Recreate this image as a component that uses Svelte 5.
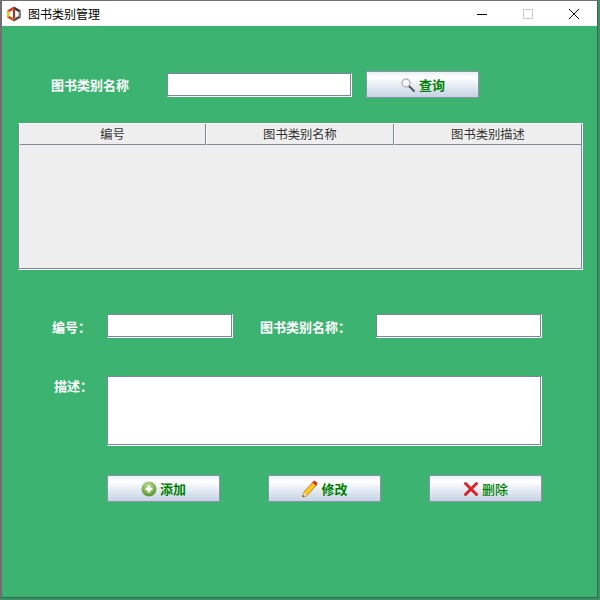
<script>
  const columns = ['编号', '图书类别名称', '图书类别描述'];
</script>

<div class="window">
  <header class="titlebar">
    <svg class="app-icon" width="16" height="16" viewBox="0 0 16 16">
      <path d="M8 0.5 15 4.5V11.5L8 15.5 1 11.5V4.5Z" fill="#fff" />
      <path d="M8 0.5 1 4.5 3.5 6 8 3.5Z" fill="#d9381e" />
      <path d="M1 4.5V11.5L3.5 10V6Z" fill="#f2c21a" />
      <path d="M1 11.5 8 15.5V12.5L3.5 10Z" fill="#c9531c" />
      <path d="M8 0.5 15 4.5 12.5 6 8 3.5Z" fill="#3a3a3a" />
      <path d="M15 4.5V11.5L12.5 10V6Z" fill="#808080" />
      <path d="M15 11.5 8 15.5V12.5L12.5 10Z" fill="#555" />
      <path d="M7 4h2v8H7z" fill="#b02a1a" />
    </svg>
    <span class="title">图书类别管理</span>
    <div class="controls">
      <svg width="12" height="12" viewBox="0 0 12 12"><path d="M1 6.5h10" stroke="#000" /></svg>
      <svg width="12" height="12" viewBox="0 0 12 12"><rect x="1.5" y="1.5" width="9" height="9" fill="none" stroke="#ccc" /></svg>
      <svg width="12" height="12" viewBox="0 0 12 12"><path d="M1 1l10 10M11 1 1 11" stroke="#111" /></svg>
    </div>
  </header>

  <main class="body">
    <section class="search-row">
      <span class="label search-label">图书类别名称</span>
      <div class="field search-field"></div>
      <button class="btn">
        <svg width="16" height="16" viewBox="0 0 16 16">
          <circle cx="6" cy="6" r="4" fill="#f4f6f8" stroke="#b4b8bc" stroke-width="1.5" />
          <path d="M9.5 9.5 14 14" stroke="#55595e" stroke-width="2" stroke-linecap="round" />
        </svg>
        <span>查询</span>
      </button>
    </section>

    <section class="table">
      <div class="thead">
        {#each columns as col}
          <div class="th">{col}</div>
        {/each}
      </div>
      <div class="tbody"></div>
    </section>

    <section class="form-row">
      <span class="label id-label">编号：</span>
      <div class="field id-field"></div>
      <span class="label name-label">图书类别名称：</span>
      <div class="field name-field"></div>
    </section>

    <section class="desc-row">
      <span class="label desc-label">描述：</span>
      <div class="field desc-field"></div>
    </section>

    <section class="actions">
      <button class="btn">
        <svg width="16" height="16" viewBox="0 0 16 16">
          <defs>
            <radialGradient id="plusFill" cx="0.45" cy="0.25" r="0.85">
              <stop offset="0" stop-color="#b9dc8e" />
              <stop offset="1" stop-color="#4f8a24" />
            </radialGradient>
          </defs>
          <circle cx="8" cy="8" r="7.5" fill="url(#plusFill)" />
          <path d="M8 4.5v7M4.5 8h7" stroke="#fff" stroke-width="2.6" />
        </svg>
        <span>添加</span>
      </button>
      <button class="btn">
        <svg width="17" height="18" viewBox="0 0 17 18">
          <path d="M12 2 15.5 5 6 15.5 1.8 17 2.6 12.5Z" fill="#ffc81e" stroke="#a86f10" stroke-width="0.8" />
          <path d="M12.2 1.4 13.5 0.6 16.6 3.3 15.8 5 14.8 5.6 11.2 2.6Z" fill="#e02a20" />
          <path d="M2.6 12.5 1.6 17 6 15.5Z" fill="#f3d9b0" />
          <path d="M2 15 1.6 17 3.8 16.3Z" fill="#5a2b10" />
        </svg>
        <span>修改</span>
      </button>
      <button class="btn">
        <svg width="16" height="16" viewBox="0 0 16 16">
          <path d="M2.5 2.5 13.5 13.5M13.5 2.5 2.5 13.5" stroke="#d8232a" stroke-width="3" stroke-linecap="round" />
        </svg>
        <span class="thin">删除</span>
      </button>
    </section>
  </main>
</div>

<style>
  :global(body) {
    margin: 0;
    background: #3d8f66;
  }
  .window {
    width: 598px;
    height: 598px;
    box-sizing: border-box;
    border: solid #707070;
    border-width: 1px 1px 1px 2px;
    border-right-color: #34694f;
    border-bottom-color: #34694f;
    display: flex;
    flex-direction: column;
    font-family: "Noto Sans CJK SC", "Liberation Sans", sans-serif;
  }
  .titlebar {
    height: 25px;
    flex: none;
    background: #fff;
    display: flex;
    align-items: center;
    padding-left: 4px;
  }
  .app-icon {
    margin-right: 6px;
  }
  .title {
    font-size: 12px;
    color: #000;
  }
  .controls {
    margin-left: auto;
    display: flex;
    gap: 34px;
    padding-right: 17px;
  }
  .body {
    flex: 1;
    background: #3cb371;
    padding: 45px 14px 0 16px;
  }
  .label {
    color: #fff;
    font-size: 13px;
    font-weight: 700;
    white-space: nowrap;
  }
  .field {
    box-sizing: border-box;
    background: #fff;
    border: 1px solid;
    border-color: #7a8a99 #fff #fff #7a8a99;
    box-shadow: inset -1px -1px 0 #7a8a99;
  }
  .search-row {
    display: flex;
    align-items: center;
    height: 27px;
    padding-left: 33px;
  }
  .search-label {
    width: 116px;
  }
  .search-field {
    width: 185px;
    height: 24px;
    margin-right: 14px;
  }
  .table {
    margin-top: 25px;
    width: 565px;
    height: 147px;
    box-sizing: border-box;
    background: #eeeeee;
    border: 1px solid;
    border-color: #fff #fff #fff #7a8a99;
    box-shadow: inset -1px -1px 0 #7a8a99;
    display: flex;
    flex-direction: column;
  }
  .thead {
    display: grid;
    grid-template-columns: 187px 188px 188px;
    height: 20px;
    flex: none;
  }
  .th {
    box-sizing: border-box;
    border-left: 1px solid #fff;
    border-right: 1px solid #7a8a99;
    border-bottom: 1px solid #7a8a99;
    background: #eeeeee;
    color: #333;
    font-size: 12.3px;
    line-height: 20px;
    text-align: center;
  }
  .tbody {
    flex: 1;
  }
  .form-row {
    margin-top: 44px;
    display: flex;
    align-items: center;
    height: 24px;
    padding-left: 34px;
  }
  .id-label {
    width: 55px;
  }
  .id-field {
    width: 126px;
    height: 24px;
    margin-right: 27px;
  }
  .name-label {
    width: 116px;
  }
  .name-field {
    width: 166px;
    height: 24px;
  }
  .desc-row {
    margin-top: 38px;
    display: flex;
    align-items: flex-start;
    padding-left: 36px;
  }
  .desc-label {
    width: 53px;
    line-height: 20px;
  }
  .desc-field {
    width: 435px;
    height: 70px;
  }
  .actions {
    margin-top: 29px;
    padding-left: 89px;
    display: flex;
    gap: 48px;
  }
  .btn {
    box-sizing: border-box;
    width: 113px;
    height: 27px;
    padding: 0;
    border: 1px solid #8a93a8;
    background: linear-gradient(#e9eef6 0%, #ffffff 22%, #e6ecf4 55%, #c5d3e4 100%);
    display: flex;
    align-items: center;
    justify-content: center;
    gap: 3px;
    color: #008000;
    font-family: inherit;
    font-size: 13px;
    font-weight: 700;
  }
  .thin {
    font-weight: 500;
  }
</style>
